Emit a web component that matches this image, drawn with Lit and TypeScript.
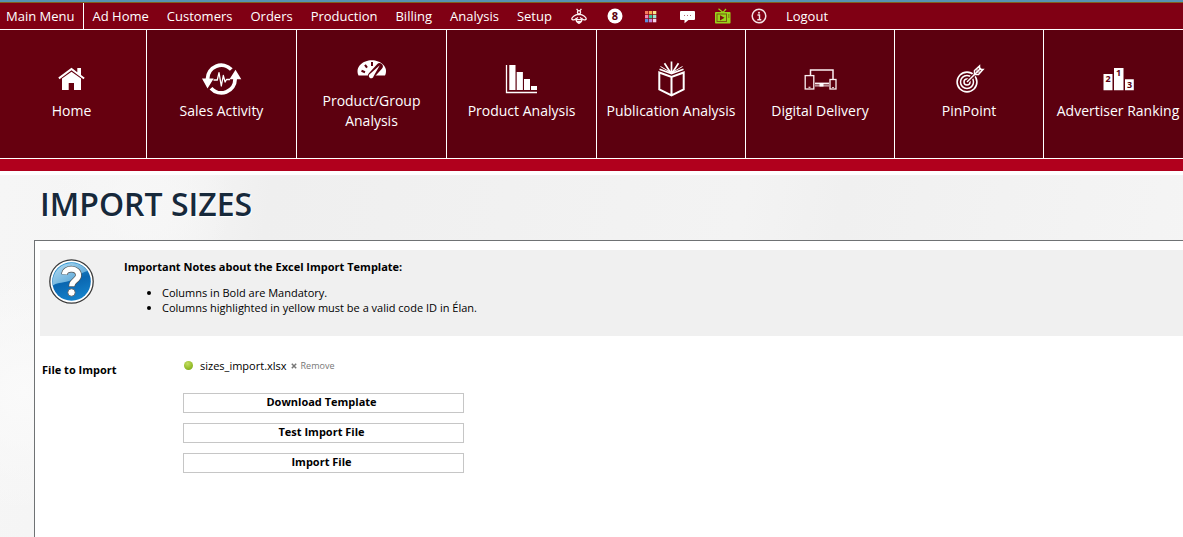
import { LitElement, html, css, svg } from "lit";
import { customElement, state } from "lit/decorators.js";

const bee = svg`<g fill="none" stroke="#fbf1f3" stroke-width="1.300">
  <circle cx="8" cy="4.2" r="1.6"/><path d="M7.2 2.8 5.6.8M8.8 2.8 10.4.8"/>
  <path d="M7 6.4C4.500 6.600.8 8.800.8 10.800c0 1.700 3.600 1.500 6.200-1.400M9 6.400c2.500.2 6.200 2.400 6.200 4.400 0 1.700-3.600 1.500-6.200-1.400"/>
  <path d="M6.600 6.600h2.800M5 11.600h6M5.600 13.600h4.800M5.200 9.800C4.600 12.500 6 14.600 8 15.400c2-.8 3.400-2.900 2.800-5.600"/></g>`;
const eight = svg`<circle cx="8" cy="8" r="7.500" fill="#fff"/>
  <text x="8" y="12" text-anchor="middle" class="glyph big">8</text>`;
const gridColours = ["#f5795c", "#f7ad52", "#f9e78c", "#f287b4", "#3fc998", "#a0e4d4", "#5b90dc", "#c585d8", "#f5d4ea"];
const appGrid = gridColours.map(
  (c, i) => svg`<rect x=${2 + (i % 3) * 4} y=${3 + Math.floor(i / 3) * 4} width="3.300" height="3.300" fill=${c} />`
);
const chat = svg`<path d="M2 3h13a1 1 0 0 1 1 1v7a1 1 0 0 1-1 1H9.500L5.500 15.200V12H2a1 1 0 0 1-1-1V4a1 1 0 0 1 1-1z" fill="#fff"/>
  <g fill="#b06a78"><rect x="5" y="7" width="1" height="1"/><rect x="8" y="7" width="1" height="1"/><rect x="11" y="7" width="1" height="1"/></g>`;
const tv = svg`<path d="M3.500.8 8 4.500 11 1" fill="none" stroke="#98d51b" stroke-width="1.200"/>
  <rect x="0" y="4" width="15.500" height="11.500" rx=".8" fill="#98d51b"/>
  <rect x="2" y="6" width="9.500" height="7.500" fill="none" stroke="#7d5a10" stroke-width="1"/>
  <path d="M5 7.200v5.200l4.500-2.600z" fill="#7d1010"/><path d="M13 7h1.500M13 9h1.500" stroke="#7d5a10"/>`;
const info = svg`<circle cx="8" cy="8" r="6.800" fill="none" stroke="#f3e3e6" stroke-width="1.500"/>
  <path d="M6.500 7h2v4.500M6.300 11.700h4" stroke="#f3e3e6" fill="none" stroke-width="1.400"/><circle cx="8" cy="4.700" r="1" fill="#f3e3e6"/>`;

const home = svg`<path fill="#fff" d="M9.300 20.600 22.500 10.800l5.800 4.400V11H32v7l3.700 2.700-1.200 1.500-12-8.900-12 8.900z"/>
  <path fill="#fff" d="M13 21.600 22.500 14.800 32 21.600V33h-7v-7h-5.300v7H13z"/>`;
const sales = svg`<g fill="none" stroke="#fff"><path stroke-width="3.800" d="M8.500 22A13.800 13.800 0 0 1 32.300 12.500M36.100 22A13.800 13.800 0 0 1 12 31.200"/>
  <path stroke-width="1.300" stroke-linejoin="round" d="M14.500 23h3.800L20 15.700 22.300 29l2-10.500 1.800 6.500 1.400-2.500H31"/></g>
  <path fill="#fff" d="M3 21.500h11.700L8.500 31.500zM30.500 22.200h11.800L36.500 12.800z"/>`;
const gauge = svg`<path fill="#fff" d="M9.500 28.500C5.500 20 14 13.300 22.800 13.300S40 20 36 28.500z"/>
  <g stroke="#5c000f" stroke-width="2" fill="none"><path d="M23 15v4M16 17.800l2 2.800M12.500 23.800l3.500 1.400"/></g>
  <path d="M22.300 28.500 30.500 19.500" stroke="#5c000f" stroke-width="6.500" stroke-linecap="round"/>
  <path d="M20.300 27.500 30.800 18.300 24.600 29.300a2.400 2.400 0 1 1-4.300-1.800z" fill="#fff"/>`;
const bars = svg`<path d="M7.500 8v27.500H38" fill="none" stroke="#fff" stroke-width="1.300"/>
  <path fill="#fff" d="M10.300 8h6.200v25h-6.200zM17.700 15h6.200v18h-6.200zM25 22h6v11h-6zM32 29h6v4h-6z"/>`;
const book = svg`<g fill="none" stroke="#fff" stroke-width="2"><path d="M10.300 15.500 22.500 20l12.200-4.500v16.800L22.500 38.300 10.300 32.300zM22.500 20v18"/>
  <path d="M10.500 12.300 22.500 16.600 34.500 12.300M22.500 4.500v11M15.500 6.200l5.800 9M29.500 6.200l-5.800 9" stroke-width="1.700"/><path d="M11.500 9.500 20 14.500M33.500 9.500 25 14.500" stroke-width="1"/></g>`;
const devices = svg`<g fill="none" stroke="#fbf0f2" stroke-width="1.500"><path d="M12.500 18v-5h22.500v9.500"/>
  <rect x="7.200" y="18.600" width="8.600" height="13.400" stroke-width="1.300"/><rect x="32" y="22.500" width="6" height="9.500" stroke-width="1.300"/>
  <path d="M17 26.500h14" stroke-width="1.800"/><path d="M17 28.900h14" stroke-width="1"/></g>
  <path fill="#fff" d="M21.500 26h4v3.500h-4zM10.500 29.700h2v1h-2zM34 30h2v.8h-2z"/>`;
const target = svg`<g fill="none" stroke="#fff"><circle cx="20" cy="25" r="9.900" stroke-width="1.600"/><circle cx="20" cy="25" r="6.500" stroke-width="1.500"/><circle cx="20" cy="25" r="3" stroke-width="1.500"/>
  <path d="M20 25 31 14" stroke="#5c000f" stroke-width="3.500"/><path d="M20 25 34 11" stroke-width="1.400"/>
  <path d="M27.500 17.500v-4l5-4.500v3.500h3.500l-4.500 5z" stroke-width="1.500"/><path d="M30 15v-3.500M30 15h3.500" stroke-width="1"/></g>`;
const podium = svg`<path fill="#fff" d="M7.500 17h9v16.300h-9zM18 11h9.500v22.300H18zM29 22.300h8.800v11H29z"/>
  <g class="glyph" text-anchor="middle"><text x="12" y="25">2</text><text x="22.500" y="19">1</text><text x="33.500" y="31">3</text></g>`;

const menu = [
  { label: "Ad Home" }, { label: "Customers" }, { label: "Orders" }, { label: "Production" },
  { label: "Billing" }, { label: "Analysis" }, { label: "Setup" },
  { name: "Bee", icon: bee }, { name: "Notifications", icon: eight }, { name: "Apps", icon: appGrid },
  { name: "Chat", icon: chat }, { name: "Videos", icon: tv }, { name: "Information", icon: info },
  { label: "Logout" },
];

const tiles = [
  { label: "Home", icon: home }, { label: "Sales Activity", icon: sales },
  { label: "Product/Group Analysis", icon: gauge }, { label: "Product Analysis", icon: bars },
  { label: "Publication Analysis", icon: book }, { label: "Digital Delivery", icon: devices },
  { label: "PinPoint", icon: target }, { label: "Advertiser Ranking", icon: podium },
];

@customElement("app-root")
export class AppRoot extends LitElement {
  static styles = css`
    :host { display: flex; flex-direction: column; min-height: 100vh; overflow: hidden; color: #000;
      font-family: "Open Sans", "Noto Sans", sans-serif; font-size: 11px; line-height: 15px; }
    a { color: inherit; text-decoration: none; }
    .strip { height: 2px; background: #5593b3; }
    .menu { display: flex; height: 26px; border-top: 1px solid #80601f; background: #800014; color: #fff;
      font-size: 13px; line-height: 26px; white-space: nowrap; }
    .menu a { display: flex; align-items: center; padding: 0 9px; }
    .menu .icon { padding: 0 10px; }
    .menu .main { padding: 0 8px 0 6px; border-right: 1px solid #fff; }
    .glyph { font: 700 9px "Open Sans", sans-serif; fill: #5c000f; }
    .big { font-size: 11px; }
    .tiles { display: grid; grid-template-columns: repeat(4, 150fr) repeat(4, 149fr); width: calc(100% + 13px);
      margin-left: -3px; border: solid #fff; border-width: 1px 0; background: #5c000f; }
    .tile { display: flex; flex-direction: column; align-items: center; justify-content: center; height: 118px;
      padding-bottom: 10px; border-right: 1px solid #fff; color: #fff; text-align: center;
      font-size: 14px; line-height: 20px; }
    .tile:first-child { background: #66000f; }
    .caption { max-width: 140px; }
    .band { height: 12px; background: #b1001d; border-bottom: 4px solid #fff; }
    .page { flex: 1; display: flex; flex-direction: column; padding-left: 34px; background:
      radial-gradient(circle at 2% 60%, #fafafa 0, transparent 120px),
      radial-gradient(circle at 12% 8%, #f7f7f7 0, transparent 90px),
      linear-gradient(100deg, #f6f6f6 0, #f4f4f4 15%, #efefef 22%, #f3f3f3 60%, #f0f0f0 68%, #f5f5f5 100%); }
    h1 { margin: 0; padding: 9px 6px 16px; color: #17293b; font-size: 32px; font-weight: 600; line-height: 40px;
      text-shadow: 1px 1px 1px #fff; }
    .panel { flex: 1; border: solid #6f7274; border-width: 1px 0 0 1px; background: #fff; padding: 9px 0 0 5px; }
    .notes { display: flex; align-items: flex-start; gap: 30px; padding: 9px 9px 21px; background: #f0f0f0; }
    .notes h2 { margin: 0 0 10px; font-size: 11px; font-weight: 700; line-height: 16px; }
    .notes ul { margin: 0; padding-left: 38px; }
    .form { display: grid; grid-template-columns: 141px 281px; padding: 22px 2px; }
    .name { padding-top: 4px; font-weight: 700; }
    .file { display: flex; align-items: center; gap: 7px; height: 15px; margin-bottom: 20px; }
    .dot { width: 9px; height: 9px; margin-left: 1px; border-radius: 50%; background: radial-gradient(circle at 40% 30%, #c4de62, #93bb28 60%, #739b1e); }
    button { font: inherit; color: inherit; cursor: pointer; }
    .remove { display: flex; align-items: center; gap: 4px; padding: 0; border: 0; background: none; color: #777;
      font-size: 9px; }
    .file .remove { margin-left: -3px; }
    .actions { display: grid; gap: 10px; }
    .action { height: 20px; padding: 0 4px 2px 0; border: 1px solid #c6c6c6; background: #fff; font-weight: 700; line-height: 16px; }
  `;

  @state() private file = "sizes_import.xlsx";

  render() {
    return html`
      <div class="strip"></div>
      <nav class="menu" aria-label="Main">
        <a class="main" href="#">Main Menu</a>
        ${menu.map((m) => m.icon
          ? html`<a class="icon" href="#" aria-label=${m.name}><svg width="16" height="16" viewBox="0 0 16 16" aria-hidden="true">${m.icon}</svg></a>`
          : html`<a href="#">${m.label}</a>`)}
      </nav>
      <nav class="tiles" aria-label="Analysis">
        ${tiles.map((t) => html`<a class="tile" href="#">
          <svg width="45" height="44" viewBox="0 0 45 44" aria-hidden="true">${t.icon}</svg>
          <span class="caption">${t.label}</span></a>`)}
      </nav>
      <div class="band"></div>
      <main class="page">
        <h1>IMPORT SIZES</h1>
        <div class="panel">
          <section class="notes">
            <svg width="45" height="45" viewBox="0 0 45 45" aria-hidden="true">
              <defs><linearGradient id="ball" x1=".3" y1="0" x2=".6" y2="1"><stop offset="0" stop-color="#2f9bd6"/><stop offset=".5" stop-color="#0a66b0"/><stop offset="1" stop-color="#1583cc"/></linearGradient>
              <linearGradient id="shine" x1="0" y1="0" x2="1" y2="1"><stop offset="0" stop-color="#b9def2"/><stop offset="1" stop-color="#3f97d0"/></linearGradient></defs>
              <circle cx="22.500" cy="22.500" r="21.700" fill="#fff" stroke="#3a3a3a" stroke-width="1.300"/>
              <circle cx="22.500" cy="22.500" r="19.300" fill="url(#ball)"/>
              <path d="M3.800 26.500A19.300 19.300 0 0 1 38.500 12C32 13 27 20 20 22 12 24 7 24 3.800 26.500z" fill="url(#shine)"/>
              <g fill="none" stroke-linejoin="round"><path d="M15.500 15.500c.5-7.500 14.500-7 14 1-.3 4.800-6.800 5-6.800 11.300" stroke="#555" stroke-width="6.600"/>
              <path d="M15.500 15.200c.5-7.200 14.500-6.700 14 1.300-.3 4.800-6.800 5-6.800 10.700" stroke="#fff" stroke-width="5.200"/></g>
              <circle cx="22.500" cy="33.500" r="3.700" fill="#fff" stroke="#555" stroke-width=".8"/>
            </svg>
            <div>
              <h2>Important Notes about the Excel Import Template:</h2>
              <ul><li>Columns in Bold are Mandatory.</li>
              <li>Columns highlighted in yellow must be a valid code ID in Élan.</li></ul>
            </div>
          </section>
          <section class="form">
            <div class="name">File to Import</div>
            <div>
              <div class="file"><span class="dot"></span><span>${this.file}</span>
                <button class="remove" type="button"><svg width="6" height="6" viewBox="0 0 6 6" aria-hidden="true"><path d="M.8.8 5.200 5.200M5.200.8.8 5.200" stroke="#777" stroke-width="1.500"/></svg>Remove</button></div>
              <div class="actions">
                <button class="action" type="button">Download Template</button>
                <button class="action" type="button">Test Import File</button>
                <button class="action" type="button">Import File</button>
              </div>
            </div>
          </section>
        </div>
      </main>`;
  }
}
